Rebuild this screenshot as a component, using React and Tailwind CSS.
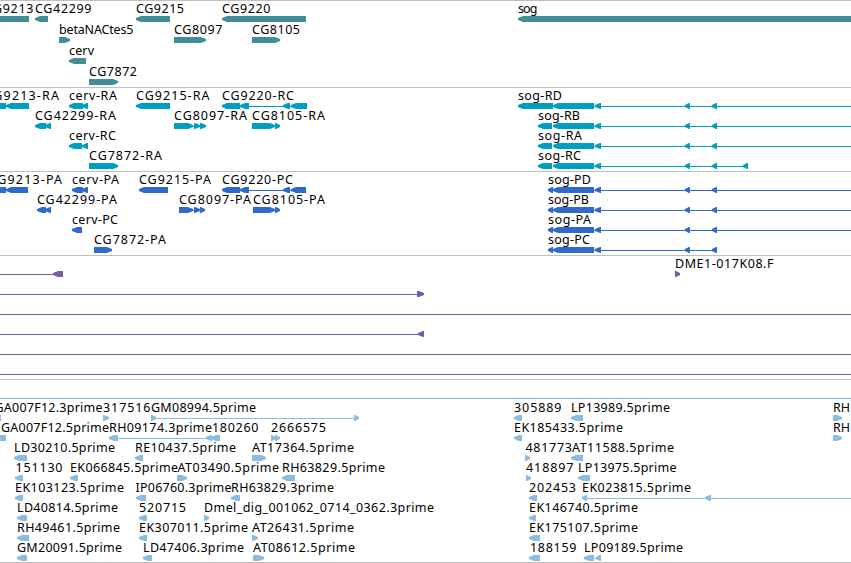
import clsx from "clsx";

// label: [text, left, right]
// left / right: [start, end] spans of a directed feature
// line: [start, end] of an intron connector
const genes = [
  {
    labels: [["CG9213", -15, 33.5], ["CG42299", 35.5, 91.5], ["CG9215", 136.5, 184], ["CG9220", 222.5, 270.5], ["sog", 518.5, 537.5]],
    left: [[-20, 29], [35, 48], [136, 170], [222, 306], [518, 860]],
  },
  { labels: [["betaNACtes5", 59.5, 133.5], ["CG8097", 174.5, 222.5], ["CG8105", 252.5, 300]], right: [[59, 70], [174, 206], [252, 280]] },
  { labels: [["cerv", 69.5, 94]], left: [[69, 86]] },
  { labels: [["CG7872", 89.5, 137]], right: [[89, 118]] },
];

const transcripts = [
  {
    labels: [["CG9213-RA", -15, 59], ["cerv-RA", 69.5, 117], ["CG9215-RA", 136.5, 209.5], ["CG9220-RC", 222.5, 294], ["sog-RD", 518.5, 562]],
    left: [[-10, 6], [6, 29], [69, 83], [82, 88], [136, 170], [222, 240], [240, 249], [283, 290], [291, 307], [518, 553], [553, 594], [595, 601], [685, 690], [712, 717]],
    line: [[240, 294], [594, 851]],
  },
  {
    labels: [["CG42299-RA", 35.5, 116], ["CG8097-RA", 174.5, 247], ["CG8105-RA", 252.5, 325], ["sog-RB", 538.5, 580]],
    left: [[35, 46], [45, 51], [538, 552], [553, 594], [595, 601], [685, 690], [712, 717]],
    right: [[174, 193], [194, 200], [200, 206], [252, 275], [275, 280]],
    line: [[190, 204], [272, 278], [594, 851]],
  },
  {
    labels: [["cerv-RC", 69.5, 116], ["sog-RA", 538.5, 582]],
    left: [[69, 82], [82, 88], [538, 552], [553, 594], [595, 601], [685, 690], [712, 717]],
    line: [[594, 851]],
  },
  {
    labels: [["CG7872-RA", 89.5, 162], ["sog-RC", 538.5, 581]],
    left: [[538, 552], [553, 594], [595, 601], [685, 690], [712, 717], [743, 748]],
    right: [[89, 118]],
    line: [[594, 748]],
  },
];

const proteins = [
  {
    labels: [["CG9213-PA", -11, 62], ["cerv-PA", 72.5, 119], ["CG9215-PA", 139.5, 211], ["CG9220-PC", 222.5, 293], ["sog-PD", 548.5, 591]],
    left: [[-10, 6], [6, 28], [72, 83], [82, 88], [139, 168], [222, 240], [240, 249], [283, 290], [291, 306], [548, 553], [553, 594], [595, 601], [685, 690], [712, 717]],
    line: [[240, 294], [594, 851]],
  },
  {
    labels: [["CG42299-PA", 37.5, 117], ["CG8097-PA", 179.5, 251], ["CG8105-PA", 253.5, 325], ["sog-PB", 548.5, 589]],
    left: [[37, 46], [45, 51], [548, 553], [553, 594], [595, 601], [685, 690], [712, 717]],
    right: [[179, 193], [194, 200], [200, 205], [253, 275], [275, 280]],
    line: [[190, 204], [272, 278], [594, 851]],
  },
  {
    labels: [["cerv-PC", 72.5, 118], ["sog-PA", 548.5, 591]],
    left: [[72, 82], [548, 553], [553, 594], [595, 601], [685, 690], [712, 717]],
    line: [[594, 851]],
  },
  {
    labels: [["CG7872-PA", 94.5, 166], ["sog-PC", 548.5, 590]],
    left: [[548, 553], [553, 594], [595, 601], [685, 690], [712, 717]],
    right: [[94, 112]],
    line: [[594, 717]],
  },
];

const clones = [
  { labels: [["DME1-017K08.F", 675.5, 773.5]], left: [[53, 63]], right: [[675, 680]], line: [[0, 55]] },
  { right: [[417, 424]], line: [[0, 418]] },
  { line: [[0, 851]] },
  { left: [[418, 424]], line: [[0, 420]] },
  { line: [[0, 851]] },
  { line: [[0, 851]] },
];

const ests = [
  { line: [[0, 851]] },
  {
    labels: [["GA007F12.3prime", -5, 102.5], ["317516", 103.5, 150.5], ["GM08994.5prime", 151.5, 256], ["305889", 514.5, 561.5], ["LP13989.5prime", 571.5, 670], ["RH", 833.5, 850]],
    left: [[-6, 1], [514, 522], [571, 583]],
    right: [[103, 109], [151, 156], [354, 359], [833, 842]],
    line: [[154, 356]],
  },
  {
    labels: [["GA007F12.5prime", 1.5, 109], ["RH09174.3prime", 109.5, 212], ["180260", 212.5, 258.5], ["2666575", 271.5, 326], ["EK185433.5prime", 514.5, 623], ["RH", 833.5, 850]],
    left: [[-6, 6], [109, 118], [206, 212], [211, 220], [514, 522]],
    right: [[271, 276], [275, 280], [833, 842]],
    line: [[117, 208]],
  },
  {
    labels: [["LD30210.5prime", 14.5, 115], ["RE10437.5prime", 135.5, 236], ["AT17364.5prime", 252.5, 354], ["481773", 526, 572], ["AT11588.5prime", 572.5, 674]],
    left: [[14, 27], [135, 143], [571, 583]],
    right: [[252, 266], [525, 530]],
  },
  {
    labels: [["151130", 16, 62.5], ["EK066845.5prime", 70.5, 178], ["AT03490.5prime", 178, 279], ["RH63829.5prime", 282.5, 385], ["418897", 526.5, 573.5], ["LP13975.5prime", 578.5, 676.5]],
    left: [[15, 23], [70, 78], [282, 295], [578, 590]],
    right: [[177, 187], [526, 531]],
  },
  {
    labels: [["EK103123.5prime", 15.5, 124], ["IP06760.3prime", 136, 231.5], ["RH63829.3prime", 231.5, 334], ["202453", 529.5, 576], ["EK023815.5prime", 582.5, 691]],
    left: [[15, 23], [136, 146], [231, 240], [529, 537], [582, 587], [705, 711]],
    line: [[586, 851]],
  },
  {
    labels: [["LD40814.5prime", 17.5, 118], ["520715", 139.5, 186], ["Dmel_dig_001062_0714_0362.3prime", 204.5, 434], ["EK146740.5prime", 529.5, 638]],
    left: [[17, 27], [139, 147], [529, 536]],
    right: [[204, 209]],
  },
  {
    labels: [["RH49461.5prime", 17.5, 120], ["EK307011.5prime", 139.5, 248], ["AT26431.5prime", 252.5, 354], ["EK175107.5prime", 529.5, 638]],
    left: [[17, 29], [139, 147], [529, 540]],
    right: [[252, 258]],
  },
  {
    labels: [["GM20091.5prime", 17.5, 122], ["LD47406.3prime", 143.5, 244], ["AT08612.5prime", 253.5, 355], ["188159", 530.5, 576.5], ["LP09189.5prime", 584.5, 683]],
    left: [[17, 27], [143, 152], [529, 540], [584, 594], [596, 601]],
    right: [[253, 264]],
    line: [[592, 599]],
  },
];

function arrow(from, to, dir) {
  const head = Math.min(5, to - from - 1);
  if (dir === "left") return `${from},17 ${from + head},15 ${to},15 ${to},21 ${from + head},21 ${from},19`;
  return `${to},17 ${to - head},15 ${from},15 ${from},21 ${to - head},21 ${to},19`;
}

function Row({ row, tall }) {
  const { labels = [], left = [], right = [], line = [] } = row;
  return (
    <svg width="851" height={tall ? 21 : 20} className="block shrink-0 overflow-visible">
      {line.map(([a, b], i) => <rect key={i} x={a} y="18" width={b - a} height="1" />)}
      {left.map(([a, b], i) => <polygon key={i} points={arrow(a, b, "left")} />)}
      {right.map(([a, b], i) => <polygon key={i} points={arrow(a, b, "right")} />)}
      {labels.map(([text, a, b]) => (
        <text key={text} x={a - 0.5} y="12" textLength={b - a + 0.5} className="fill-black">{text}</text>
      ))}
    </svg>
  );
}

function Track({ rows, className, tall }) {
  return (
    <section className={clsx("flex shrink-0 flex-col border-t border-[#bebebe]", className)}>
      {rows.map((row, i) => <Row key={i} row={row} tall={tall} />)}
    </section>
  );
}

export default function App() {
  return (
    <main className="flex h-[563px] w-[851px] flex-col overflow-hidden border-b border-[#bebebe] bg-white font-['Noto_Sans',sans-serif] text-[12.5px]">
      <Track rows={genes} tall className="h-[87px] fill-[#408f96]" />
      <Track rows={transcripts} className="h-[84px] fill-[#009ebf]" />
      <Track rows={proteins} className="h-[84px] fill-[#316acc]" />
      <Track rows={clones} className="h-[124px] fill-[#7959aa]" />
      <Track rows={ests} className="h-[183px] fill-[#89bcde]" />
    </main>
  );
}
